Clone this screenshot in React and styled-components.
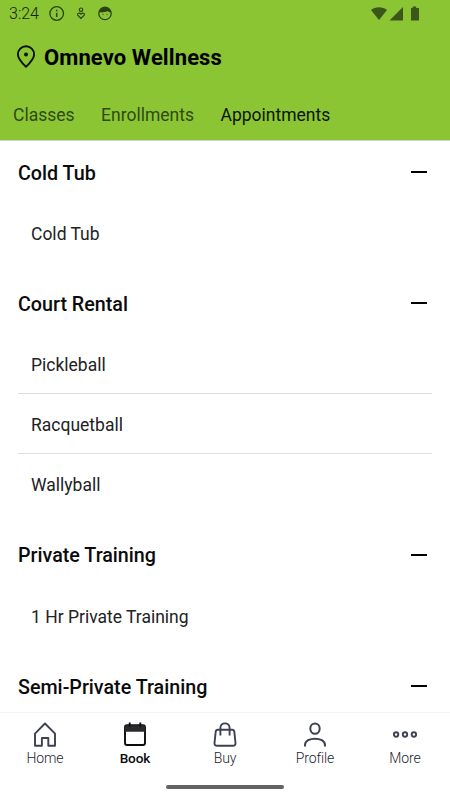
import styled, { createGlobalStyle } from "styled-components"

const sections = [
    { title: "Cold Tub", items: ["Cold Tub"] },
    { title: "Court Rental", items: ["Pickleball", "Racquetball", "Wallyball"] },
    { title: "Private Training", items: ["1 Hr Private Training"] },
    { title: "Semi-Private Training", items: [] },
]

const navItems = [
    { label: "Home", icon: <HomeIcon /> },
    { label: "Book", icon: <BookIcon />, active: true },
    { label: "Buy", icon: <BuyIcon /> },
    { label: "Profile", icon: <ProfileIcon /> },
    { label: "More", icon: <MoreIcon /> },
]

export default function App() {
    return (
        <Screen>
            <GlobalStyle />
            <Header>
                <StatusBar>
                    <Clock>3:24</Clock>
                    <StatusIcons />
                    <SystemIcons />
                </StatusBar>
                <Location>
                    <PinIcon />
                    <h1>Omnevo Wellness</h1>
                </Location>
                <Tabs>
                    <Tab>Classes</Tab>
                    <Tab>Enrollments</Tab>
                    <Tab $active>Appointments</Tab>
                </Tabs>
            </Header>
            <Content>
                {sections.map((section) => (
                    <Section key={section.title}>
                        <SectionHeader>
                            <h2>{section.title}</h2>
                            <Minus />
                        </SectionHeader>
                        {section.items.map((item) => (
                            <Item key={item}>{item}</Item>
                        ))}
                    </Section>
                ))}
            </Content>
            <BottomNav>
                {navItems.map((item) => (
                    <NavItem key={item.label} $active={item.active}>
                        {item.icon}
                        <span>{item.label}</span>
                    </NavItem>
                ))}
            </BottomNav>
            <GestureBar />
        </Screen>
    )
}

function StatusIcons() {
    return (
        <svg width="66" height="18" viewBox="0 0 66 18" fill="none" stroke="#2b4313">
            <circle cx="8.7" cy="8.5" r="6.8" strokeWidth="1.3" />
            <path d="M8.7 7.8v4.2M8.7 4.7v1.5" strokeWidth="1.5" />
            <circle cx="33" cy="4.7" r="1.7" strokeWidth="1.2" />
            <path d="M33 13.5l-3.2-3.3c-1-1.7 1.5-3.1 3.2-1.1 1.7-2 4.2-.6 3.2 1.1L33 13.5z" strokeWidth="1.2" />
            <circle cx="57" cy="8.5" r="6.2" strokeWidth="1.3" />
            <path d="M51.2 7.3c0-7.4 11.6-7.4 11.6 0-1.7 0-2.5-.6-3.2-1.3-2 1.3-5.4 1.6-8.4 1.3z" fill="#2b4313" stroke="none" />
            <circle cx="55" cy="9.3" r=".6" fill="#2b4313" stroke="none" />
            <circle cx="59" cy="9.3" r=".6" fill="#2b4313" stroke="none" />
        </svg>
    )
}

function SystemIcons() {
    return (
        <SystemSvg width="50" height="16" viewBox="0 0 50 16" fill="#3b5619">
            <path d="M1 4C5.5.3 12.5.3 17 4L9 14z" />
            <path d="M33 1v13.5H19.5z" />
            <path d="M42.7.5h3.5V2H49v12.5h-8V2h1.7z" />
        </SystemSvg>
    )
}

function PinIcon() {
    return (
        <svg width="20" height="24" viewBox="0 0 20 24" fill="none" stroke="#0a1005" strokeWidth="1.9">
            <path d="M10 21.7C7.5 19.3 1.9 14 1.9 9.4a8.1 8.1 0 0 1 16.2 0c0 4.6-5.6 9.900-8.100 12.300z" />
            <circle cx="10" cy="9.5" r="2" fill="#0a1005" stroke="none" />
        </svg>
    )
}

function HomeIcon() {
    return (
        <svg width="26" height="28" viewBox="0 0 26 28" fill="none" stroke="#3e4152" strokeWidth="1.9">
            <path d="M3 12.7L13 2.5l10 10.2v12.1h-6.7V17H9.9v7.8H3z" strokeLinejoin="round" />
        </svg>
    )
}

function BookIcon() {
    return (
        <svg width="26" height="28" viewBox="0 0 26 28" fill="none" stroke="#0c0c0e" strokeWidth="1.9">
            <rect x="3" y="4.2" width="20" height="19.8" rx="2" />
            <path d="M3 10.8V6q0-1.8 1.8-1.8h16.4q1.8 0 1.8 1.8v4.8z" fill="#2a2a2c" stroke="none" />
            <path d="M7.7 1.5v4M18.3 1.5v4" />
        </svg>
    )
}

function BuyIcon() {
    return (
        <svg width="26" height="28" viewBox="0 0 26 28" fill="none" stroke="#3e4152" strokeWidth="1.9">
            <path d="M5.8 8.7h14.4c1.3 0 1.9.6 2.1 1.9l1.2 11.2c.2 1.9-.8 3-2.7 3H5.2c-1.9 0-2.9-1.1-2.7-3l1.2-11.2C3.9 9.3 4.5 8.7 5.8 8.7z" />
            <path d="M8.4 14.5V7.1c0-6.3 9.2-6.3 9.2 0v7.4" />
        </svg>
    )
}

function ProfileIcon() {
    return (
        <svg width="26" height="28" viewBox="0 0 26 28" fill="none" stroke="#3e4152" strokeWidth="2">
            <ellipse cx="13" cy="7.6" rx="4.7" ry="5.2" />
            <path d="M3 25.5V24c0-8.5 20-8.5 20 0v1.5" />
        </svg>
    )
}

function MoreIcon() {
    return (
        <svg width="26" height="28" viewBox="0 0 26 28" fill="none" stroke="#3e4152" strokeWidth="1.9">
            <circle cx="4.1" cy="13.5" r="2.2" />
            <circle cx="13" cy="13.5" r="2.2" />
            <circle cx="21.9" cy="13.5" r="2.2" />
        </svg>
    )
}

const GlobalStyle = createGlobalStyle`
    * {
        margin: 0;
        padding: 0;
        box-sizing: border-box;
    }
    body {
        font-family: Roboto, sans-serif;
        background-color: #fff;
    }
`

const Screen = styled.div`
    width: 450px;
    height: 800px;
    display: flex;
    flex-direction: column;
    overflow: hidden;
`

const Header = styled.header`
    flex: none;
    height: 141px;
    background-color: #8bc534;
    border-bottom: 1px solid #cdd2d3;
`

const StatusBar = styled.div`
    display: flex;
    align-items: center;
    height: 36px;
    padding: 0 30px 9px 9px;
`

const Clock = styled.span`
    width: 39px;
    font-size: 16px;
    font-weight: 300;
    color: #14240a;
`

const SystemSvg = styled.svg`
    margin-left: auto;
`

const Location = styled.div`
    display: flex;
    align-items: center;
    gap: 8px;
    height: 42px;
    padding-left: 16px;
    h1 {
        font-size: 22px;
        font-weight: 700;
        letter-spacing: 0.1px;
        color: #000;
    }
`

const Tabs = styled.nav`
    display: flex;
    align-items: center;
    gap: 26.5px;
    height: 74px;
    padding-left: 13px;
`

const Tab = styled.span`
    font-size: 17.5px;
    line-height: 24px;
    color: ${(props) => (props.$active ? "#0c1405" : "#304a14")};
`

const Content = styled.main`
    flex: 1;
    min-height: 0;
    padding: 2px 18px 0;
    overflow: hidden;
`

const Section = styled.section`
    margin-bottom: 11.4px;
`

const SectionHeader = styled.div`
    display: flex;
    align-items: center;
    justify-content: space-between;
    height: 60px;
    padding-right: 5px;
    h2 {
        font-size: 19.7px;
        font-weight: 500;
        color: #0b0b0c;
    }
`

const Minus = styled.span`
    width: 16px;
    height: 2px;
    margin-bottom: 2px;
    background-color: #000;
`

const Item = styled.div`
    height: 60px;
    padding-top: 1px;
    padding-left: 13px;
    font-size: 17.5px;
    line-height: 60px;
    color: #222224;
    &:not(:last-child) {
        border-bottom: 1px solid #dcdddd;
    }
`

const BottomNav = styled.nav`
    flex: none;
    display: grid;
    grid-template-columns: repeat(5, 1fr);
    height: 73px;
    padding-top: 8px;
    border-top: 1px solid #f3f3f3;
`

const NavItem = styled.div`
    display: flex;
    flex-direction: column;
    align-items: center;
    font-size: ${(props) => (props.$active ? "13.6px" : "14px")};
    font-weight: ${(props) => (props.$active ? 500 : 300)};
    line-height: 18px;
    letter-spacing: -0.1px;
    color: ${(props) => (props.$active ? "#0b0b0c" : "#1c1f30")};
`

const GestureBar = styled.div`
    flex: none;
    align-self: center;
    width: 118px;
    height: 4px;
    margin-bottom: 11px;
    border-radius: 2px;
    background-color: #636462;
`
